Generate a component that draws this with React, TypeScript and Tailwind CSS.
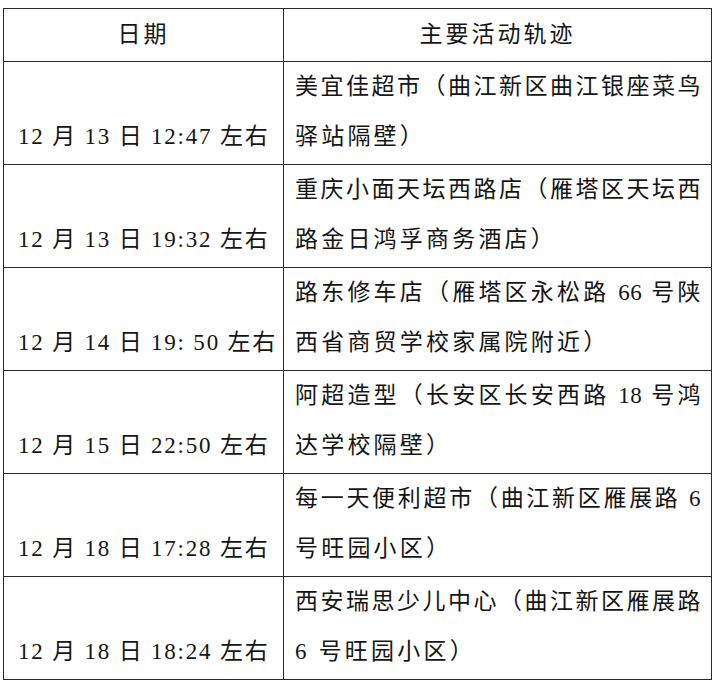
const rows = [
  {
    date: '12 月 13 日 12:47 左右',
    lines: ['美宜佳超市（曲江新区曲江银座菜鸟', '驿站隔壁）'],
  },
  {
    date: '12 月 13 日 19:32 左右',
    lines: ['重庆小面天坛西路店（雁塔区天坛西', '路金日鸿孚商务酒店）'],
  },
  {
    date: '12 月 14 日 19: 50 左右',
    lines: ['路东修车店（雁塔区永松路 66 号陕', '西省商贸学校家属院附近）'],
  },
  {
    date: '12 月 15 日 22:50 左右',
    lines: ['阿超造型（长安区长安西路 18 号鸿', '达学校隔壁）'],
  },
  {
    date: '12 月 18 日 17:28 左右',
    lines: ['每一天便利超市（曲江新区雁展路 6', '号旺园小区）'],
  },
  {
    date: '12 月 18 日 18:24 左右',
    lines: ['西安瑞思少儿中心（曲江新区雁展路', '6 号旺园小区）'],
  },
];

export default function App() {
  return (
    <div className="min-h-[688px] bg-white pl-[3px] pt-[8px] font-['Liberation_Serif','Noto_Sans_CJK_SC',serif] text-[23px] text-[#151515]">
      <table className="w-[709px] table-fixed border-collapse">
        <colgroup>
          <col className="w-[280px]" />
          <col />
        </colgroup>
        <thead>
          <tr className="h-[53px]">
            <th className="border border-[#2a2a2a] text-center font-normal tracking-[3px]">日期</th>
            <th className="border border-[#2a2a2a] text-center font-normal tracking-[3px]">主要活动轨迹</th>
          </tr>
        </thead>
        <tbody>
          {rows.map((row) => (
            <tr key={row.date} className="h-[103px]">
              <td className="border border-[#2a2a2a] pl-[14px] pr-0 align-top">
                <div className="pt-[50px] leading-[50px] whitespace-nowrap tracking-[1.8px]">{row.date}</div>
              </td>
              <td className="border border-[#2a2a2a] pl-[11px] pr-[10px] align-top leading-[50px]">
                <div className="whitespace-nowrap tracking-[0.5px] [text-align-last:justify]">{row.lines[0]}</div>
                <div className="whitespace-nowrap tracking-[3.2px]">{row.lines[1]}</div>
              </td>
            </tr>
          ))}
        </tbody>
      </table>
    </div>
  );
}
